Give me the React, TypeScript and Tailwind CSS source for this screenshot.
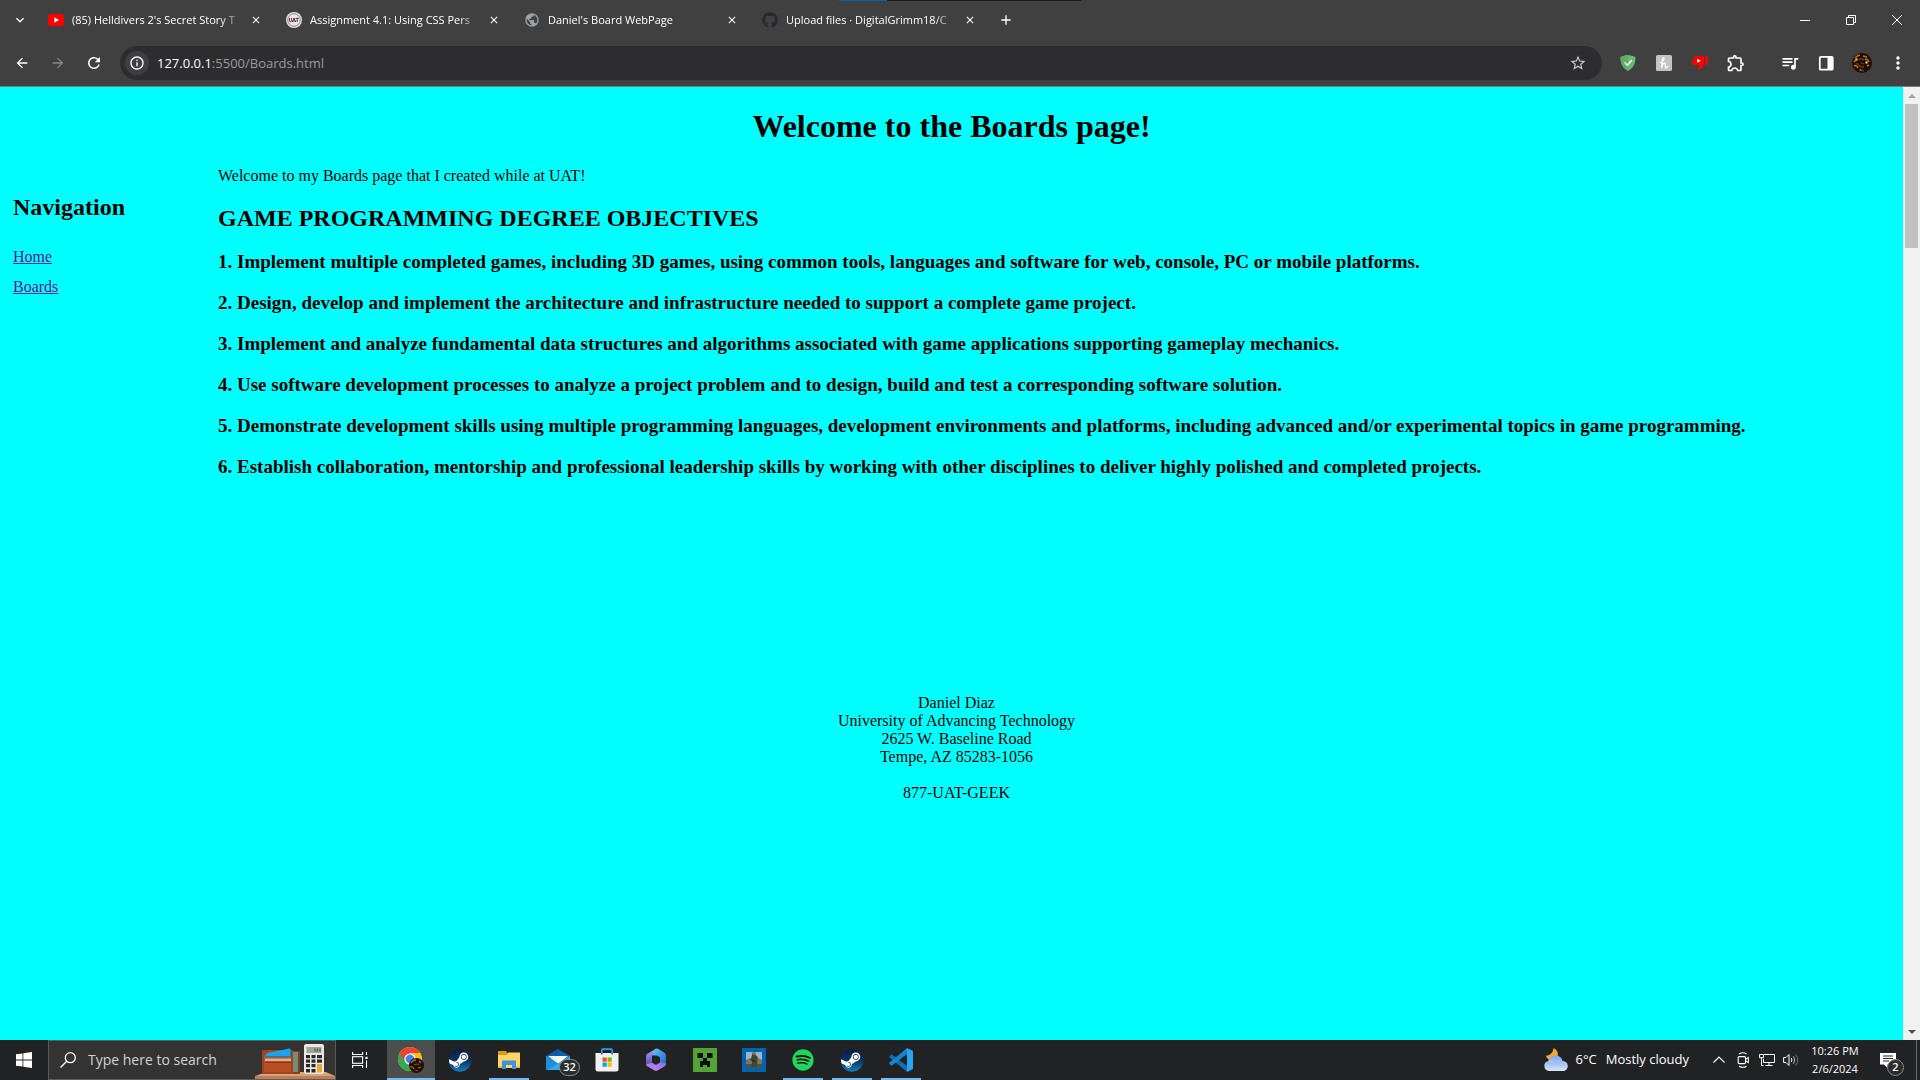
import React from "react";
import {
  MdArrowBack,
  MdArrowForward,
  MdClose,
  MdExpandMore,
  MdMoreVert,
  MdOutlineExtension,
  MdOutlineInfo,
  MdPublic,
  MdQueueMusic,
  MdRefresh,
  MdStarBorder,
  MdAdd,
} from "react-icons/md";
import { FaGithub, FaSpotify, FaSteam } from "react-icons/fa";

/* ---------- favicons ---------- */

const YouTubeIcon = () => (
  <svg viewBox="0 0 16 16" className="h-4 w-4 shrink-0">
    <rect x="0" y="2" width="16" height="12" rx="3" fill="#f00" />
    <path d="M6.3 5.3v5.4L11 8z" fill="#fff" />
  </svg>
);

const UatIcon = () => (
  <svg viewBox="0 0 16 16" className="h-4 w-4 shrink-0">
    <circle cx="8" cy="8" r="8" fill="#e8e8e8" />
    <circle cx="8" cy="8" r="6.3" fill="none" stroke="#77777c" strokeWidth="0.9" />
    <path d="M3.4 6v2.6q0 1.2 1 1.2t1-1.2V6" fill="none" stroke="#8d1f2f" strokeWidth="1" />
    <path d="M6.2 10 8 6l1.7 4M7 9h2" fill="none" stroke="#3c3540" strokeWidth="1" />
    <path d="M9.6 6.3h3.2M11.2 6.3V10" fill="none" stroke="#8d1f2f" strokeWidth="1" />
  </svg>
);

/* ---------- extension icons ---------- */

const ShieldIcon = () => (
  <svg viewBox="0 0 16 16" className="h-4 w-4">
    <path d="M8 .3c2.3 0 5 .5 7.4 1.6 0 3.6.2 9.6-7.4 14C.4 11.5.6 5.5.6 1.9 3 .8 5.7.3 8 .3z" fill="#68bc71" />
    <path d="M8 .3v15.6C.4 11.5.6 5.5.6 1.9 3 .8 5.7.3 8 .3z" fill="#5fae68" />
    <path d="M4.7 7.6 7.3 10.3l4.5-5.3" fill="none" stroke="#fff" strokeWidth="1.4" />
  </svg>
);

const HoneyIcon = () => (
  <svg viewBox="0 0 16 16" className="h-4 w-4">
    <rect width="16" height="16" rx="1.5" fill="#c4c4c4" />
    <path
      d="M4.3 7.5C6.7 6.5 8.6 4.3 8 2.9c-.6-.9-1.6.4-1.8 2.6L5.6 13c.5-3 1.5-4.8 2.9-4.8 1.8 0-.2 4.6 1.2 4.7.9 0 1.5-.7 2-1.5"
      fill="none"
      stroke="#fff"
      strokeWidth="1.3"
      strokeLinecap="round"
    />
  </svg>
);

const DislikeIcon = () => (
  <svg viewBox="0 0 16 16" className="h-4 w-4">
    <path d="M3.5 1H12v9l-4.5 5c-1 .3-1.5-.3-1.3-1.2L6.8 10H1.5C.4 10 0 9.2.1 8.3L2 2.1C2.3 1.4 2.8 1 3.5 1z" fill="#f00" />
    <rect x="13.3" y="1" width="2.7" height="9" fill="#f00" />
    <path d="M5.2 3.8v4L8.8 5.8z" fill="#fff" />
  </svg>
);

const SidePanelIcon = () => (
  <svg viewBox="0 0 16 16" className="h-4 w-4">
    <rect x="1.8" y="1.8" width="12.9" height="12.9" rx="1" fill="none" stroke="#fff" strokeWidth="1.8" />
    <rect x="9.5" y="1.8" width="5.2" height="12.9" fill="#fff" />
  </svg>
);

const Portrait = ({ className }: { className: string }) => (
  <svg viewBox="0 0 20 20" className={className}>
    <circle cx="10" cy="10" r="10" fill="#1b0f08" />
    <path d="M3 5c2-2 3-3 5-3M2 9l3-3M11 3l4 1M13 6c2 0 3 1 4 3M2 13c2-1 3 0 4 2M15 13l2-1" fill="none" stroke="#c4700f" strokeWidth="1.6" />
    <path d="M7 7c2-2 4-1 5 0M5 10c1 3 4 4 7 4M8 17l4 1M9 10l3 1" fill="none" stroke="#6e3509" strokeWidth="1.8" />
    <circle cx="4.5" cy="6.5" r="1.3" fill="#f0a33a" />
    <circle cx="14.5" cy="9.5" r="1.2" fill="#d8c4b8" />
    <circle cx="8.5" cy="17" r="1" fill="#b07a3c" />
  </svg>
);

/* ---------- taskbar icons ---------- */

const WindowsIcon = () => (
  <svg viewBox="0 0 16 16" className="h-4 w-4" fill="#fff">
    <path d="M0 2.3 6.5 1.4v6.2H0zM7.3 1.3 16 0v7.6H7.3zM0 8.4h6.5v6.2L0 13.7zM7.3 8.4H16V16l-8.7-1.3z" />
  </svg>
);

const SearchArt = () => (
  <svg viewBox="0 0 80 38" className="h-[38px] w-20 shrink-0">
    <path d="M0 35 12 31H71l9 4v3H0z" fill="#d9a47a" />
    <path d="M0 35H80v3H0z" fill="#b98058" />
    <rect x="35" y="10" width="10" height="23" rx="1" fill="#8e3a1c" />
    <rect x="38" y="11" width="5" height="20" fill="#6d8f7c" />
    <rect x="7" y="9" width="31" height="24" rx="1.5" fill="#a4421d" />
    <path d="M9 15 34 7.5 36 8v8H9z" fill="#0a84d0" />
    <path d="M12 12 35 7.5V15H10z" fill="#19a4ee" />
    <rect x="9" y="16" width="27" height="15" fill="#b84e25" />
    <rect x="10" y="17.5" width="26" height="3" fill="#e8ae82" />
    <path d="M10 20.5H36V22H10z" fill="#8a3515" />
    <rect x="49" y="3" width="20" height="30" rx="2" fill="#ece7e1" />
    <rect x="51.5" y="6" width="15" height="6" fill="#9aa79b" />
    <path d="M60 7.500v3M62.500 7.500v3M65 7.500v3" stroke="#46544a" strokeWidth="1.2" />
    <g fill="#26292c">
      <rect x="51" y="14" width="4" height="3.2" />
      <rect x="56.5" y="14" width="4" height="3.2" />
      <rect x="62" y="14" width="5" height="3.2" />
      <rect x="51" y="18.5" width="4" height="3.2" />
      <rect x="56.5" y="18.5" width="4" height="3.2" />
      <rect x="62" y="18.5" width="5" height="3.2" />
      <rect x="51" y="23" width="4" height="3.2" />
      <rect x="56.5" y="23" width="4" height="3.2" />
      <rect x="51" y="28" width="4" height="3.5" />
      <rect x="56.5" y="28" width="4" height="3.5" />
    </g>
    <rect x="62" y="23" width="5" height="8.5" fill="#eaa83a" />
  </svg>
);

const TaskViewIcon = () => (
  <svg viewBox="0 0 16 16" className="h-4 w-4" fill="none" stroke="#fff" strokeWidth="1.1">
    <path d="M.6 0v2.5h10V0M.6 16v-2.5h10V16" />
    <rect x=".6" y="4.7" width="10" height="6.6" />
    <path d="M14.500 0v3M14.500 8.500V16" />
    <rect x="13.4" y="4.8" width="2.2" height="2.2" fill="#fff" stroke="none" />
  </svg>
);

const ChromeIcon = () => (
  <svg viewBox="0 0 26 26" className="h-[26px] w-[26px]">
    <circle cx="12" cy="12" r="12" fill="#fbc116" />
    <path d="M1.600 6A12 12 0 0 0 12 24l5.200-9-5.200-3z" fill="#34a853" />
    <path d="M12 0A12 12 0 0 1 22.400 6H12L6.800 15 1.600 6A12 12 0 0 1 12 0z" fill="#ea4335" />
    <circle cx="12" cy="12" r="5.6" fill="#fff" />
    <circle cx="12" cy="12" r="4.4" fill="#3f83f0" />
    <circle cx="18.500" cy="18.500" r="7.5" fill="#1b0f08" />
    <path d="M13 16c1-2 3-3 5-3M12 20c2-1 3 0 4 2M21 14l2 2M20 21l3-1" fill="none" stroke="#b8690f" strokeWidth="1.300" />
    <path d="M16 18c2-1 4-1 5 0M17 23l3 1" fill="none" stroke="#7a4a1c" strokeWidth="1.200" />
  </svg>
);

const SteamIcon = () => (
  <span className="flex h-6 w-6 items-center justify-center">
    <svg viewBox="0 0 24 24" className="h-0 w-0">
      <defs>
        <linearGradient id="steamFill" x1="0" y1="0" x2="0" y2="1">
          <stop offset="0" stopColor="#0e1b3d" />
          <stop offset="0.55" stopColor="#0b3564" />
          <stop offset="1" stopColor="#1380bd" />
        </linearGradient>
      </defs>
    </svg>
    <span className="flex h-[22px] w-[22px] items-center justify-center rounded-full bg-white">
      <FaSteam className="h-6 w-6 shrink-0" fill="url(#steamFill)" />
    </span>
  </span>
);

const FolderIcon = () => (
  <svg viewBox="0 0 24 24" className="h-6 w-6">
    <path d="M1 3h8l1.500 2H23v15H1z" fill="#d99a14" />
    <path d="M1 7h9l1.500-2.500H23V20H1z" fill="#fbd667" />
    <path d="M5 21v-7.500a1 1 0 0 1 1-1h12a1 1 0 0 1 1 1V21h-4v-4H9v4z" fill="#3d94dc" />
    <path d="M1 18.500h4V20H1zM19 18.500h4V20h-4z" fill="#eab33b" />
  </svg>
);

const MailIcon = () => (
  <svg viewBox="0 0 24 24" className="h-6 w-6">
    <path d="M0 8 12 1l12 7v14H0z" fill="#0f5ea8" />
    <path d="M2 8h20l-10 8z" fill="#f4f8fb" />
    <path d="M0 8v14h24V8L12 15.500z" fill="#35abec" />
    <path d="M0 8 12 15.500 1.500 22H0z" fill="#1c90dc" />
  </svg>
);

const StoreIcon = () => (
  <svg viewBox="0 0 24 24" className="h-6 w-6">
    <path d="M6.800 7V2.200q0-1 1-1h8.400q1 0 1 1V7" fill="none" stroke="#23a5ee" strokeWidth="1.700" />
    <path d="M.5 5h23v16a2.500 2.500 0 0 1-2.500 2.500H3A2.500 2.500 0 0 1 .5 21z" fill="#f1f1f1" />
    <path d="M6.800 5v1.500M17.200 5v1.500" stroke="#1b6ea8" strokeWidth="1.700" />
    <rect x="7.5" y="9.5" width="4.2" height="4.2" fill="#f25022" />
    <rect x="12.5" y="9.5" width="4.2" height="4.2" fill="#7fba00" />
    <rect x="7.5" y="14.5" width="4.2" height="4.2" fill="#00a4ef" />
    <rect x="12.5" y="14.5" width="4.2" height="4.2" fill="#ffb900" />
  </svg>
);

const M365Icon = () => (
  <svg viewBox="0 0 24 24" className="h-6 w-6">
    <defs>
      <linearGradient id="m365a" x1="0" y1="0" x2="0" y2="1">
        <stop offset="0" stopColor="#a9a6f5" />
        <stop offset="1" stopColor="#5b4bb5" />
      </linearGradient>
      <linearGradient id="m365b" x1="0" y1="0" x2="1" y2="1">
        <stop offset="0" stopColor="#5ac8f5" />
        <stop offset="1" stopColor="#2a5fc8" />
      </linearGradient>
      <linearGradient id="m365c" x1="0" y1="1" x2="1" y2="0">
        <stop offset="0" stopColor="#c78bf0" />
        <stop offset="1" stopColor="#8a6ae0" />
      </linearGradient>
    </defs>
    <path d="M12 .8 3.500 5.700Q2 6.600 2 8.400v8l6 1V8L14 4z" fill="url(#m365a)" />
    <path d="M10.500 1.600 12 .8q1-.5 2 0l6.500 4q1.500.9 1.500 2.700v9l-6-1V9L9.500 7.500q-1-3.500 1-5.900z" fill="url(#m365b)" />
    <path d="M2 16.400q0 1 1 1.600l7.500 4.600q1.500.8 3 0l7-4.200q1.500-1 1.500-2.600l-6-1.800-4 2.500-4-2z" fill="url(#m365c)" />
    <path d="M12 7.300 16 9.500v5L12 16.800 8 14.500v-5z" fill="#212223" />
  </svg>
);

const CreeperIcon = () => (
  <svg viewBox="0 0 24 24" className="h-6 w-6">
    <rect width="24" height="24" fill="#52a535" />
    <path d="M4.500 5H10v5H4.500zM14 5h5.500v5H14zM10 10h4v3h3v6h-3v-2h-4v2H7v-6h3z" fill="#0b0f08" />
  </svg>
);

const HaloIcon = () => (
  <svg viewBox="0 0 24 24" className="h-6 w-6">
    <rect width="24" height="24" fill="#0063b1" />
    <rect x="4" y="4" width="16" height="16" fill="#9db4c6" />
    <path d="M4 12l4-2 3 2 4-3 5 3v8H4z" fill="#76786a" />
    <path d="M4 16h16v4H4z" fill="#4c5347" />
    <path d="M10.500 4.500h3V7l2 1.500v5l-1 5.500h-2v-4l-1 4H9.500l.5-6-1-3 1-2.500z" fill="#39482f" />
    <path d="M11 5.500h2v1h-2z" fill="#d59a35" />
    <path d="M8 11l6 2-1 1-5-2z" fill="#23282a" />
  </svg>
);

const SpotifyIcon = () => (
  <span className="flex h-[22px] w-[22px] items-center justify-center rounded-full bg-[#10180f]">
    <FaSpotify className="h-[22px] w-[22px] text-[#1ed760]" />
  </span>
);

const CodeIcon = () => (
  <svg viewBox="0 0 24 24" className="h-6 w-6">
    <path d="M.3 8.400 2 6.800q.6-.5 1.300 0L18 18v5.600L17 23 .4 9.600q-.6-.6-.1-1.200z" fill="#0f6fb8" />
    <path d="M.3 15.600 2 17.200q.6.500 1.300 0L18 6V.4L17 1 .4 14.400q-.6.6-.1 1.200z" fill="#1784ce" />
    <path d="M17 .4q.6-.5 1.300-.2l4.900 2.300q.8.400.8 1.300v16.400q0 .9-.8 1.300l-4.900 2.300q-.8.300-1.300-.2 1 .3 1-1V1.400q0-1.300-1-1z" fill="#2aa3f0" />
  </svg>
);

const WeatherIcon = () => (
  <svg viewBox="0 0 24 24" className="h-6 w-6">
    <defs>
      <linearGradient id="cloudFill" x1="0" y1="0" x2="0" y2="1">
        <stop offset="0" stopColor="#7ea8ee" />
        <stop offset="0.6" stopColor="#a9c6f6" />
        <stop offset="1" stopColor="#dbe8fd" />
      </linearGradient>
    </defs>
    <path d="M9.500.3c-.6 4-2.500 7-7.700 7.500C3 11 5 12.500 7.500 12.500c4.500 0 7-4 6.300-7.500C13.300 2.600 11.600.8 9.500.3z" fill="#f4a72c" />
    <path d="M5 23a5 5 0 0 1-.6-9.900A7.300 7.300 0 0 1 18.600 13 5 5 0 0 1 19 23z" fill="url(#cloudFill)" />
    <path d="M4.400 13.100q3-.5 4.600 1.500" fill="none" stroke="#bcd2f8" strokeWidth="1" />
  </svg>
);

const MeetIcon = () => (
  <svg viewBox="0 0 16 16" className="h-4 w-4" fill="none" stroke="#fff" strokeWidth="1.1">
    <rect x="3.2" y="4.6" width="7.3" height="7" rx="1" />
    <path d="M10.500 7.400 13.300 5.600v5l-2.800-1.800M4 2Q8 -.4 11.500 2M4 14.200q4 2.200 7.500 0" />
  </svg>
);

const NetworkIcon = () => (
  <svg viewBox="0 0 16 16" className="h-4 w-4" fill="none" stroke="#fff" strokeWidth="1">
    <path d="M5 2.500h10.500v8H4.500V7M10 10.500v3M6.500 13.500h7" />
    <path d="M.5 2.500h4v3.200h-4zM2.500 5.700v7.800h2" />
  </svg>
);

const VolumeIcon = () => (
  <svg viewBox="0 0 16 16" className="h-4 w-4" fill="none" strokeWidth="1">
    <path d="M.6 5.500H3L6 2.500v11L3 10.500H.6z" stroke="#fff" />
    <path d="M8.300 6q1.300 2 0 4" stroke="#fff" />
    <path d="M10.500 4.300q2.500 3.700 0 7.400" stroke="#b5b5b5" />
    <path d="M12.800 2.600q4 5.400 0 10.800" stroke="#707070" />
  </svg>
);

/* ---------- browser ---------- */

type Tab = { title: string; icon: React.ReactNode };

const tabs: Tab[] = [
  { title: "(85) Helldivers 2's Secret Story T", icon: <YouTubeIcon /> },
  { title: "Assignment 4.1: Using CSS Pers", icon: <UatIcon /> },
  { title: "Daniel's Board WebPage", icon: <MdPublic className="h-4 w-4 shrink-0 text-[#9aa0a6]" /> },
  { title: "Upload files · DigitalGrimm18/C", icon: <FaGithub className="h-4 w-4 shrink-0 text-[#24292f]" /> },
];

const iconButton = "flex h-9 w-9 shrink-0 items-center justify-center";

function TabStrip() {
  return (
    <div className="flex h-10 items-center">
      <button aria-label="Search tabs" className="flex w-10 items-center justify-center text-white">
        <MdExpandMore className="h-4 w-4" />
      </button>
      {tabs.map((tab) => (
        <div key={tab.title} className="flex w-[238px] items-center gap-2 pr-[14px] pl-2">
          {tab.icon}
          <span className="flex-1 [mask-image:linear-gradient(to_right,black_148px,transparent_172px)] text-[11px] leading-4 whitespace-nowrap text-white">
            {tab.title}
          </span>
          <button aria-label="Close tab" className="flex h-4 w-4 items-center justify-center text-white">
            <MdClose className="h-3 w-3" />
          </button>
        </div>
      ))}
      <button aria-label="New tab" className="flex h-7 w-7 items-center justify-center text-white">
        <MdAdd className="h-4 w-4" />
      </button>
      <div className="ml-auto flex h-full">
        <button aria-label="Minimize" className="flex w-[46px] items-center justify-center">
          <svg viewBox="0 0 10 10" className="h-[10px] w-[10px]" stroke="#fff">
            <path d="M0 5.500h10" />
          </svg>
        </button>
        <button aria-label="Restore" className="flex w-[46px] items-center justify-center">
          <svg viewBox="0 0 10 10" className="h-[10px] w-[10px]" fill="none" stroke="#fff">
            <path d="M.5 2.500h7v7h-7zM2.500 2.500v-2h7v7h-2" />
          </svg>
        </button>
        <button aria-label="Close" className="flex w-[46px] items-center justify-center">
          <svg viewBox="0 0 10 10" className="h-[10px] w-[10px]" stroke="#fff">
            <path d="M0 0l10 10M10 0 0 10" />
          </svg>
        </button>
      </div>
    </div>
  );
}

function Toolbar() {
  return (
    <div className="flex h-[47px] items-center border-b border-[#7a7a7a] px-1">
      <button aria-label="Back" className={`${iconButton} text-white`}>
        <MdArrowBack className="h-4 w-4" />
      </button>
      <button aria-label="Forward" className={`${iconButton} text-[#868686]`}>
        <MdArrowForward className="h-4 w-4" />
      </button>
      <button aria-label="Reload" className={`${iconButton} text-white`}>
        <MdRefresh className="h-[18px] w-[18px]" />
      </button>
      <div className="ml-2 flex h-[34px] flex-1 items-center rounded-full bg-[#2d2d30] pr-[15px] pl-[5px]">
        <button aria-label="Site information" className="flex h-6 w-6 items-center justify-center rounded-full bg-[#3f3f42] text-white">
          <MdOutlineInfo className="h-4 w-4" />
        </button>
        <a href="#boards" className="ml-2 flex-1 text-[13px] leading-5 text-[#9a9a9b]">
          <span className="text-white">127.0.0.1</span>:5500/Boards.html
        </a>
        <button aria-label="Bookmark this tab" className="text-[#c7c7c7]">
          <MdStarBorder className="h-[18px] w-[18px]" />
        </button>
      </div>
      <div className="ml-2 flex items-center">
        <button aria-label="Ad blocker" className={iconButton}><ShieldIcon /></button>
        <button aria-label="Coupons" className={iconButton}><HoneyIcon /></button>
        <button aria-label="Return dislikes" className={iconButton}><DislikeIcon /></button>
        <button aria-label="Extensions" className={`${iconButton} text-white`}>
          <MdOutlineExtension className="h-5 w-5" />
        </button>
      </div>
      <div className="ml-[18px] flex items-center">
        <button aria-label="Media controls" className={`${iconButton} text-white`}>
          <MdQueueMusic className="h-5 w-5" />
        </button>
        <button aria-label="Side panel" className={iconButton}><SidePanelIcon /></button>
        <button aria-label="Profile" className={iconButton}><Portrait className="h-5 w-5" /></button>
        <button aria-label="Menu" className={`${iconButton} text-white`}>
          <MdMoreVert className="h-5 w-5" />
        </button>
      </div>
    </div>
  );
}

const objectives = [
  "1. Implement multiple completed games, including 3D games, using common tools, languages and software for web, console, PC or mobile platforms.",
  "2. Design, develop and implement the architecture and infrastructure needed to support a complete game project.",
  "3. Implement and analyze fundamental data structures and algorithms associated with game applications supporting gameplay mechanics.",
  "4. Use software development processes to analyze a project problem and to design, build and test a corresponding software solution.",
  "5. Demonstrate development skills using multiple programming languages, development environments and platforms, including advanced and/or experimental topics in game programming.",
  "6. Establish collaboration, mentorship and professional leadership skills by working with other disciplines to deliver highly polished and completed projects.",
];

function BoardsPage() {
  return (
    <main className="flex-1 bg-[#00ffff] pt-[21px] font-['Liberation_Serif',serif] text-base leading-[18px] text-black">
      <h1 className="text-center text-[32px] leading-[37px] font-bold">Welcome to the Boards page!</h1>
      <div className="mt-[22px] flex">
        <nav className="w-[218px] shrink-0 pt-[27px] pl-[13px]">
          <h2 className="text-2xl leading-[27px] font-bold">Navigation</h2>
          <ul className="mt-[27px] flex flex-col gap-3 text-[#551a8b]">
            <li><a href="#home" className="underline">Home</a></li>
            <li><a href="#boards" className="underline">Boards</a></li>
          </ul>
        </nav>
        <section className="flex-1">
          <p>Welcome to my Boards page that I created while at UAT!</p>
          <h2 className="mt-5 text-2xl leading-[27px] font-bold">GAME PROGRAMMING DEGREE OBJECTIVES</h2>
          <div className="mt-[19px] flex flex-col gap-[19px] text-[19px] leading-[22px] font-bold">
            {objectives.map((text) => (
              <h3 key={text}>{text}</h3>
            ))}
          </div>
        </section>
      </div>
      <address className="mt-[216px] pl-[10px] text-center not-italic">
        Daniel Diaz
        <br />
        University of Advancing Technology
        <br />
        2625 W. Baseline Road
        <br />
        Tempe, AZ 85283-1056
        <br />
        <br />
        877-UAT-GEEK
      </address>
    </main>
  );
}

function Scrollbar() {
  return (
    <div className="flex w-[17px] shrink-0 flex-col items-center bg-[#f1f1f1]">
      <button aria-label="Scroll up" className="flex h-[17px] w-full items-center justify-center">
        <svg viewBox="0 0 8 4" className="h-1 w-2"><path d="M0 4 4 0l4 4z" fill="#a3a3a3" /></svg>
      </button>
      <div className="h-36 w-[13px] bg-[#c1c1c1]" />
      <button aria-label="Scroll down" className="mt-auto flex h-[17px] w-full items-center justify-center">
        <svg viewBox="0 0 8 4" className="h-1 w-2"><path d="M0 0l4 4 4-4z" fill="#505050" /></svg>
      </button>
    </div>
  );
}

/* ---------- taskbar ---------- */

type TaskbarApp = { name: string; icon: React.ReactNode; state?: "active" | "open"; badge?: string };

const apps: TaskbarApp[] = [
  { name: "Chrome", icon: <ChromeIcon />, state: "active" },
  { name: "Steam", icon: <SteamIcon /> },
  { name: "File Explorer", icon: <FolderIcon />, state: "open" },
  { name: "Mail", icon: <MailIcon />, badge: "32" },
  { name: "Store", icon: <StoreIcon /> },
  { name: "Microsoft 365", icon: <M365Icon /> },
  { name: "Minecraft", icon: <CreeperIcon /> },
  { name: "Halo", icon: <HaloIcon /> },
  { name: "Spotify", icon: <SpotifyIcon />, state: "open" },
  { name: "Steam Client", icon: <SteamIcon />, state: "open" },
  { name: "Code", icon: <CodeIcon />, state: "open" },
];

function Taskbar() {
  return (
    <footer className="flex h-10 items-stretch bg-[#212223] text-white">
      <button aria-label="Start" className="flex w-12 items-center justify-center"><WindowsIcon /></button>
      <label className="flex w-72 items-center border border-[#5a5a5a] bg-[#333] pl-[11px]">
        <svg viewBox="0 0 16 16" className="h-4 w-4 shrink-0" fill="none" stroke="#fff" strokeWidth="1.3">
          <circle cx="10.3" cy="5.7" r="5" />
          <path d="M6.700 9.300.5 15.500" />
        </svg>
        <input
          aria-label="Search"
          placeholder="Type here to search"
          className="ml-3 min-w-0 flex-1 bg-transparent text-sm outline-none placeholder:text-[#d2d2d2]"
        />
        <SearchArt />
      </label>
      <button aria-label="Task view" className="flex w-12 items-center justify-center"><TaskViewIcon /></button>
      <div className="ml-[3px] flex gap-px">
        {apps.map((app) => (
          <button
            key={app.name}
            aria-label={app.name}
            className={`relative flex w-12 items-center justify-center ${app.state === "active" ? "bg-[#4c4d4d]" : ""}`}
          >
            {app.icon}
            {app.badge && (
              <span className="absolute right-0.5 bottom-1 flex h-[17px] w-[21px] items-center justify-center rounded-full border border-[#8a8a8a] bg-[#2b2c2d] text-[11px] font-semibold">
                {app.badge}
              </span>
            )}
            {app.state && (
              <span className={`absolute bottom-0 h-[2px] bg-[#76b9ed] ${app.state === "active" ? "w-12" : "w-10"}`} />
            )}
          </button>
        ))}
      </div>
      <div className="ml-auto flex items-center">
        <button className="flex items-center text-[13px]">
          <WeatherIcon />
          <span className="ml-2">6°C</span>
          <span className="ml-[9px]">Mostly cloudy</span>
        </button>
        <button aria-label="Show hidden icons" className="ml-[18px] flex w-6 items-center justify-center">
          <svg viewBox="0 0 12 8" className="h-2 w-3" fill="none" stroke="#fff" strokeWidth="1.2">
            <path d="M.5 6.500 6 1l5.500 5.500" />
          </svg>
        </button>
        <button aria-label="Meet now" className="flex w-6 items-center justify-center"><MeetIcon /></button>
        <button aria-label="Network" className="flex w-6 items-center justify-center"><NetworkIcon /></button>
        <button aria-label="Volume" className="flex w-6 items-center justify-center"><VolumeIcon /></button>
        <button className="flex w-16 flex-col items-center text-[11px] leading-[18px]">
          <span>10:26 PM</span>
          <span>2/6/2024</span>
        </button>
        <button
          aria-label="Notifications, 2 new"
          className="relative flex h-10 w-[50px] items-center justify-center border-r border-[#6b6b6b] pr-2"
        >
          <svg viewBox="0 0 16 16" className="h-4 w-4">
            <path d="M0 1h16v11.500H7.500V16L4 12.500H0z" fill="#fff" />
            <path d="M3 4h10M3 6.500h10M3 9h6" stroke="#212223" strokeWidth="1" />
          </svg>
          <span className="absolute right-3 bottom-1 flex h-[17px] w-[17px] items-center justify-center rounded-full border border-[#8a8a8a] bg-[#2b2c2d] text-[11px] font-semibold">
            2
          </span>
        </button>
        <span className="w-[3px]" />
      </div>
    </footer>
  );
}

export default function App() {
  return (
    <div className="relative flex min-h-screen flex-col bg-[#404040] font-['Open_Sans','Noto_Sans',sans-serif]">
      <div className="absolute top-0 left-1/2 flex h-px w-[242px] -translate-x-1/2 bg-[#1c1c1c]">
        <span className="h-px w-12 bg-[#0063b1]" />
      </div>
      <header>
        <TabStrip />
        <Toolbar />
      </header>
      <div className="flex flex-1">
        <BoardsPage />
        <Scrollbar />
      </div>
      <Taskbar />
    </div>
  );
}
